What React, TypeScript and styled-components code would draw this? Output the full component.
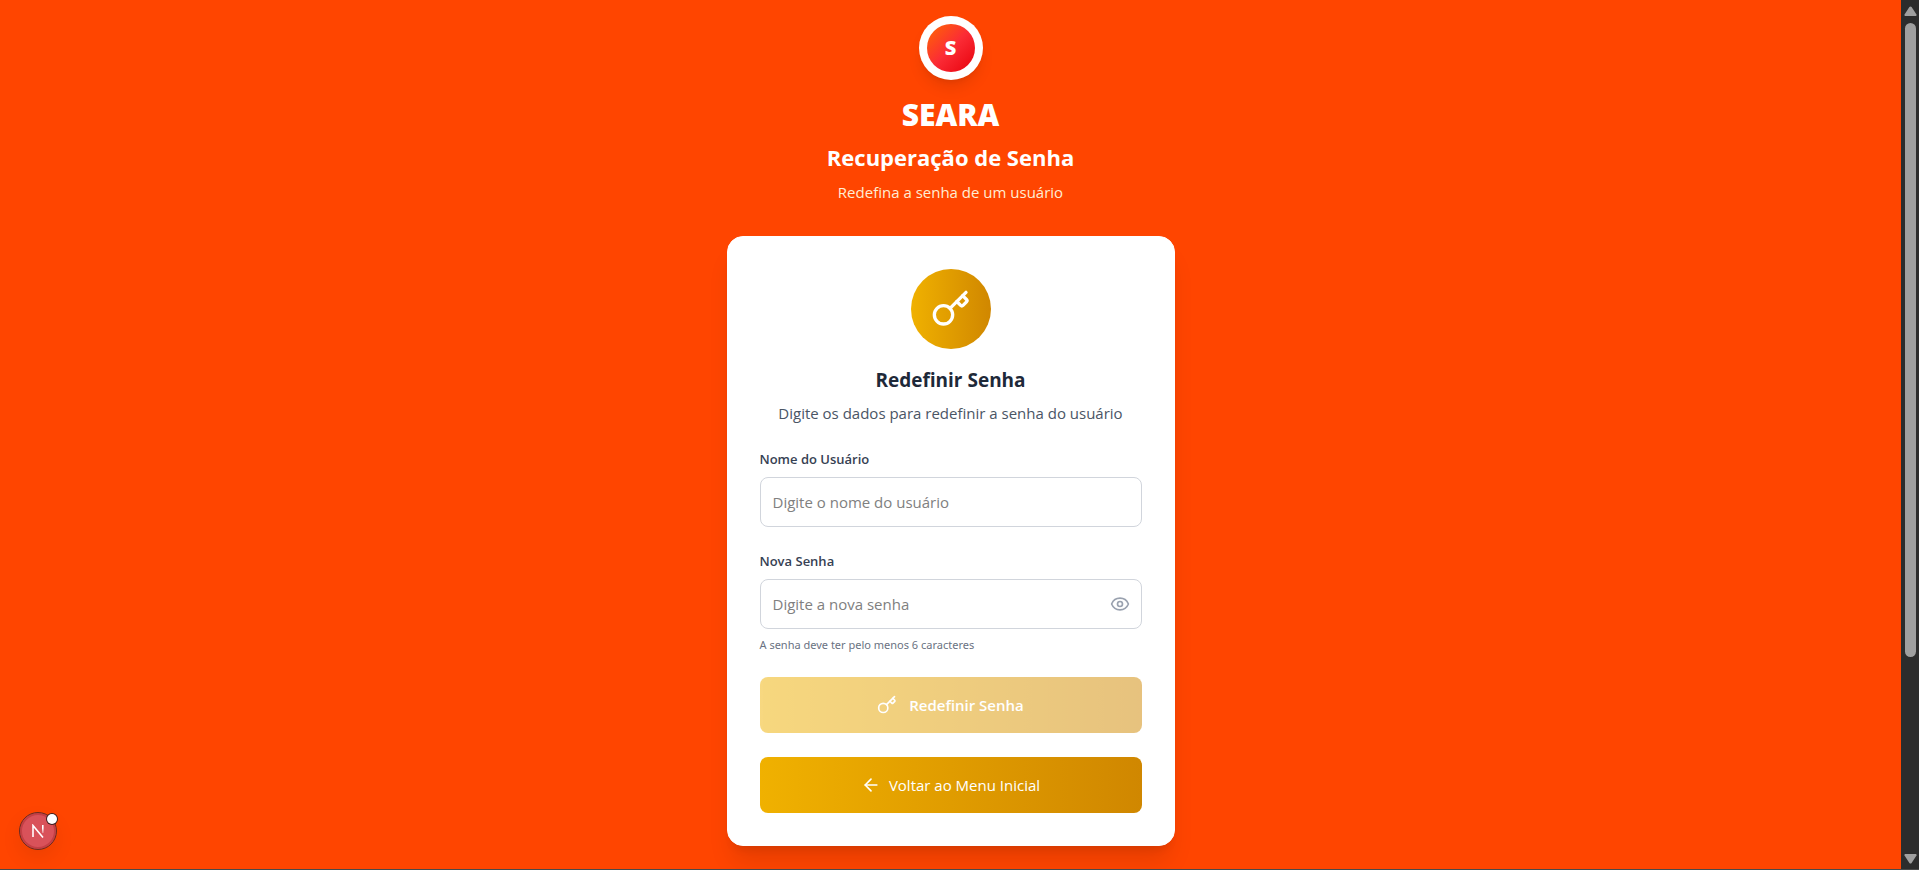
import React, { useState } from "react";
import styled, { createGlobalStyle, css } from "styled-components";
import { ArrowLeft, Eye, EyeOff, Key } from "lucide-react";

const GlobalStyle = createGlobalStyle`
  *, *::before, *::after { box-sizing: border-box; }
  html, body, #root { height: 100%; }
  body {
    margin: 0;
    background: #ff4500;
    font-family: "Open Sans", "Noto Sans", sans-serif;
    font-size: 15px;
    line-height: 24px;
    overflow: hidden;
  }
  h1, h2, h3, p { margin: 0; }
  button, input { font: inherit; }
`;

const Shell = styled.div`
  display: flex;
  height: 100vh;
  border-bottom: 1px solid #4a4a4a;
`;

const Page = styled.main`
  flex: 1;
  min-width: 0;
  overflow: hidden;
  display: flex;
  flex-direction: column;
  align-items: center;
  padding: 16px;
`;

const Header = styled.header`
  display: flex;
  flex-direction: column;
  align-items: center;
  align-self: stretch;
  text-align: center;
  margin-bottom: 32px;
  flex-shrink: 0;
`;

const LogoRing = styled.div`
  width: 64px;
  height: 64px;
  padding: 8px;
  margin-bottom: 17px;
  border-radius: 50%;
  background: #fff;
  box-shadow: 0 10px 15px -3px rgba(0, 0, 0, 0.1), 0 4px 6px -4px rgba(0, 0, 0, 0.1);
`;

const LogoMark = styled.div`
  display: flex;
  align-items: center;
  justify-content: center;
  height: 100%;
  border-radius: 50%;
  background: linear-gradient(135deg, #ff6900, #fb2c36 50%, #e7000b);
  color: #fff;
  font-family: "Noto Sans", sans-serif;
  font-size: 20px;
  font-weight: 900;
  line-height: 28px;
`;

const Brand = styled.h1`
  color: #fff;
  font-family: "Noto Sans", sans-serif;
  font-size: 30px;
  font-weight: 900;
  line-height: 36px;
  margin-bottom: 8px;
`;

const PageTitle = styled.h2`
  color: #fff;
  font-size: 22px;
  font-weight: 700;
  line-height: 32px;
  margin-bottom: 7px;
`;

const PageSubtitle = styled.p`
  color: #ffedd4;
`;

const Card = styled.section`
  width: 100%;
  max-width: 448px;
  flex-shrink: 0;
  padding: 32px;
  border: 1px solid #fff;
  border-radius: 16px;
  background: #fff;
  box-shadow: 0 20px 25px -5px rgba(0, 0, 0, 0.1), 0 8px 10px -6px rgba(0, 0, 0, 0.1);
`;

const CardHeader = styled.div`
  display: flex;
  flex-direction: column;
  align-items: center;
  text-align: center;
  margin-bottom: 24px;
`;

const gold = css`
  background: linear-gradient(90deg, #f0b100, #d08700);
  color: #fff;
`;

const IconDisc = styled.div`
  ${gold}
  display: flex;
  align-items: center;
  justify-content: center;
  width: 80px;
  height: 80px;
  margin-bottom: 17px;
  border-radius: 50%;
`;

const CardTitle = styled.h3`
  color: #1e2939;
  font-size: 19px;
  font-weight: 700;
  line-height: 28px;
  margin-bottom: 7px;
`;

const CardText = styled.p`
  color: #4a5565;
`;

const Form = styled.form`
  display: flex;
  flex-direction: column;
  gap: 24px;
`;

const Field = styled.div`
  display: flex;
  flex-direction: column;
  gap: 8px;
`;

const Label = styled.label`
  color: #364153;
  font-size: 13px;
  font-weight: 600;
  line-height: 20px;
`;

const InputBox = styled.div`
  display: flex;
  align-items: center;
  height: 50px;
  padding: 0 11px 0 12px;
  border: 1px solid #d1d5dc;
  border-radius: 8px;
  &:focus-within { border-color: #f0b100; }
`;

const Input = styled.input`
  flex: 1;
  min-width: 0;
  padding: 0;
  border: 0;
  outline: 0;
  background: transparent;
  color: #1e2939;
  &::placeholder { color: #808080; opacity: 1; }
`;

const IconButton = styled.button`
  display: flex;
  padding: 0;
  border: 0;
  background: none;
  color: #99a1af;
  cursor: pointer;
`;

const Hint = styled.p`
  color: #6a7282;
  font-family: "Noto Sans", sans-serif;
  font-size: 11px;
  line-height: 16px;
`;

const Action = styled.button<{ $strong?: boolean }>`
  ${gold}
  display: flex;
  align-items: center;
  justify-content: center;
  gap: ${(p) => (p.$strong ? 12 : 8)}px;
  height: 56px;
  border: 0;
  border-radius: 8px;
  font-weight: ${(p) => (p.$strong ? 600 : 400)};
  cursor: pointer;
  &:disabled { opacity: 0.5; cursor: not-allowed; }
`;

const ScrollTrack = styled.div`
  display: flex;
  flex-direction: column;
  align-items: center;
  width: 18px;
  padding: 6px 0 5px;
  background: #2c2c2c;
`;

const ScrollBody = styled.div`
  flex: 1;
  padding: 7px 0;
`;

const ScrollThumb = styled.div`
  width: 11px;
  height: 77%;
  border-radius: 6px;
  background: #9f9f9f;
`;

const DevBadge = styled.button`
  position: fixed;
  left: 19px;
  bottom: 20px;
  display: flex;
  align-items: center;
  justify-content: center;
  width: 38px;
  height: 38px;
  padding: 0;
  border: 1px solid #6b2a1e;
  border-radius: 50%;
  background: #d9525a;
  box-shadow: inset 0 0 0 2px #c43f45, 0 8px 20px rgba(0, 0, 0, 0.08);
`;

const BadgeDot = styled.span`
  position: absolute;
  top: 1px;
  right: -1px;
  width: 10px;
  height: 10px;
  border-radius: 50%;
  background: #fff;
  box-shadow: 0 0 0 1px #3a2020;
`;

const ScrollArrow = ({ down }: { down?: boolean }) => (
  <svg width="13" height="10" viewBox="0 0 13 10" fill="#9f9f9f">
    <path d={down ? "M1 0h11q1 0.6 .5 1.5L7.6 9q-1.1 1-2.2 0L.5 1.5Q0 .6 1 0Z" : "M1 10h11q1-.6 .5-1.5L7.6 1q-1.1-1-2.2 0L.5 8.5Q0 9.4 1 10Z"} />
  </svg>
);

export default function App() {
  const [user, setUser] = useState("");
  const [password, setPassword] = useState("");
  const [visible, setVisible] = useState(false);
  const ready = user.trim() !== "" && password.length >= 6;

  return (
    <Shell>
      <GlobalStyle />
      <Page>
        <Header>
          <LogoRing>
            <LogoMark>S</LogoMark>
          </LogoRing>
          <Brand>SEARA</Brand>
          <PageTitle>Recuperação de Senha</PageTitle>
          <PageSubtitle>Redefina a senha de um usuário</PageSubtitle>
        </Header>
        <Card>
          <CardHeader>
            <IconDisc>
              <Key size={40} />
            </IconDisc>
            <CardTitle>Redefinir Senha</CardTitle>
            <CardText>Digite os dados para redefinir a senha do usuário</CardText>
          </CardHeader>
          <Form onSubmit={(e) => e.preventDefault()}>
            <Field>
              <Label htmlFor="user">Nome do Usuário</Label>
              <InputBox>
                <Input
                  id="user"
                  placeholder="Digite o nome do usuário"
                  value={user}
                  onChange={(e) => setUser(e.target.value)}
                />
              </InputBox>
            </Field>
            <Field>
              <Label htmlFor="password">Nova Senha</Label>
              <InputBox>
                <Input
                  id="password"
                  type={visible ? "text" : "password"}
                  placeholder="Digite a nova senha"
                  value={password}
                  onChange={(e) => setPassword(e.target.value)}
                />
                <IconButton type="button" aria-label="Mostrar senha" onClick={() => setVisible(!visible)}>
                  {visible ? <EyeOff size={20} /> : <Eye size={20} />}
                </IconButton>
              </InputBox>
              <Hint>A senha deve ter pelo menos 6 caracteres</Hint>
            </Field>
            <Action type="submit" $strong disabled={!ready}>
              <Key size={20} />
              Redefinir Senha
            </Action>
            <Action type="button">
              <ArrowLeft size={20} />
              Voltar ao Menu Inicial
            </Action>
          </Form>
        </Card>
      </Page>
      <ScrollTrack aria-hidden="true">
        <ScrollArrow />
        <ScrollBody>
          <ScrollThumb />
        </ScrollBody>
        <ScrollArrow down />
      </ScrollTrack>
      <DevBadge type="button" aria-label="Next.js">
        <svg width="14" height="14" viewBox="0 0 14 14" fill="none" strokeWidth="1.6">
          <defs>
            <linearGradient id="fade" x1="0" y1="0" x2="0" y2="1">
              <stop offset="0.4" stopColor="#fff" />
              <stop offset="1" stopColor="#fff" stopOpacity="0.3" />
            </linearGradient>
          </defs>
          <path d="M2 13V1.5L12 13.5" stroke="#fff" />
          <path d="M11 1h1.6v8H11z" fill="url(#fade)" />
        </svg>
        <BadgeDot />
      </DevBadge>
    </Shell>
  );
}
